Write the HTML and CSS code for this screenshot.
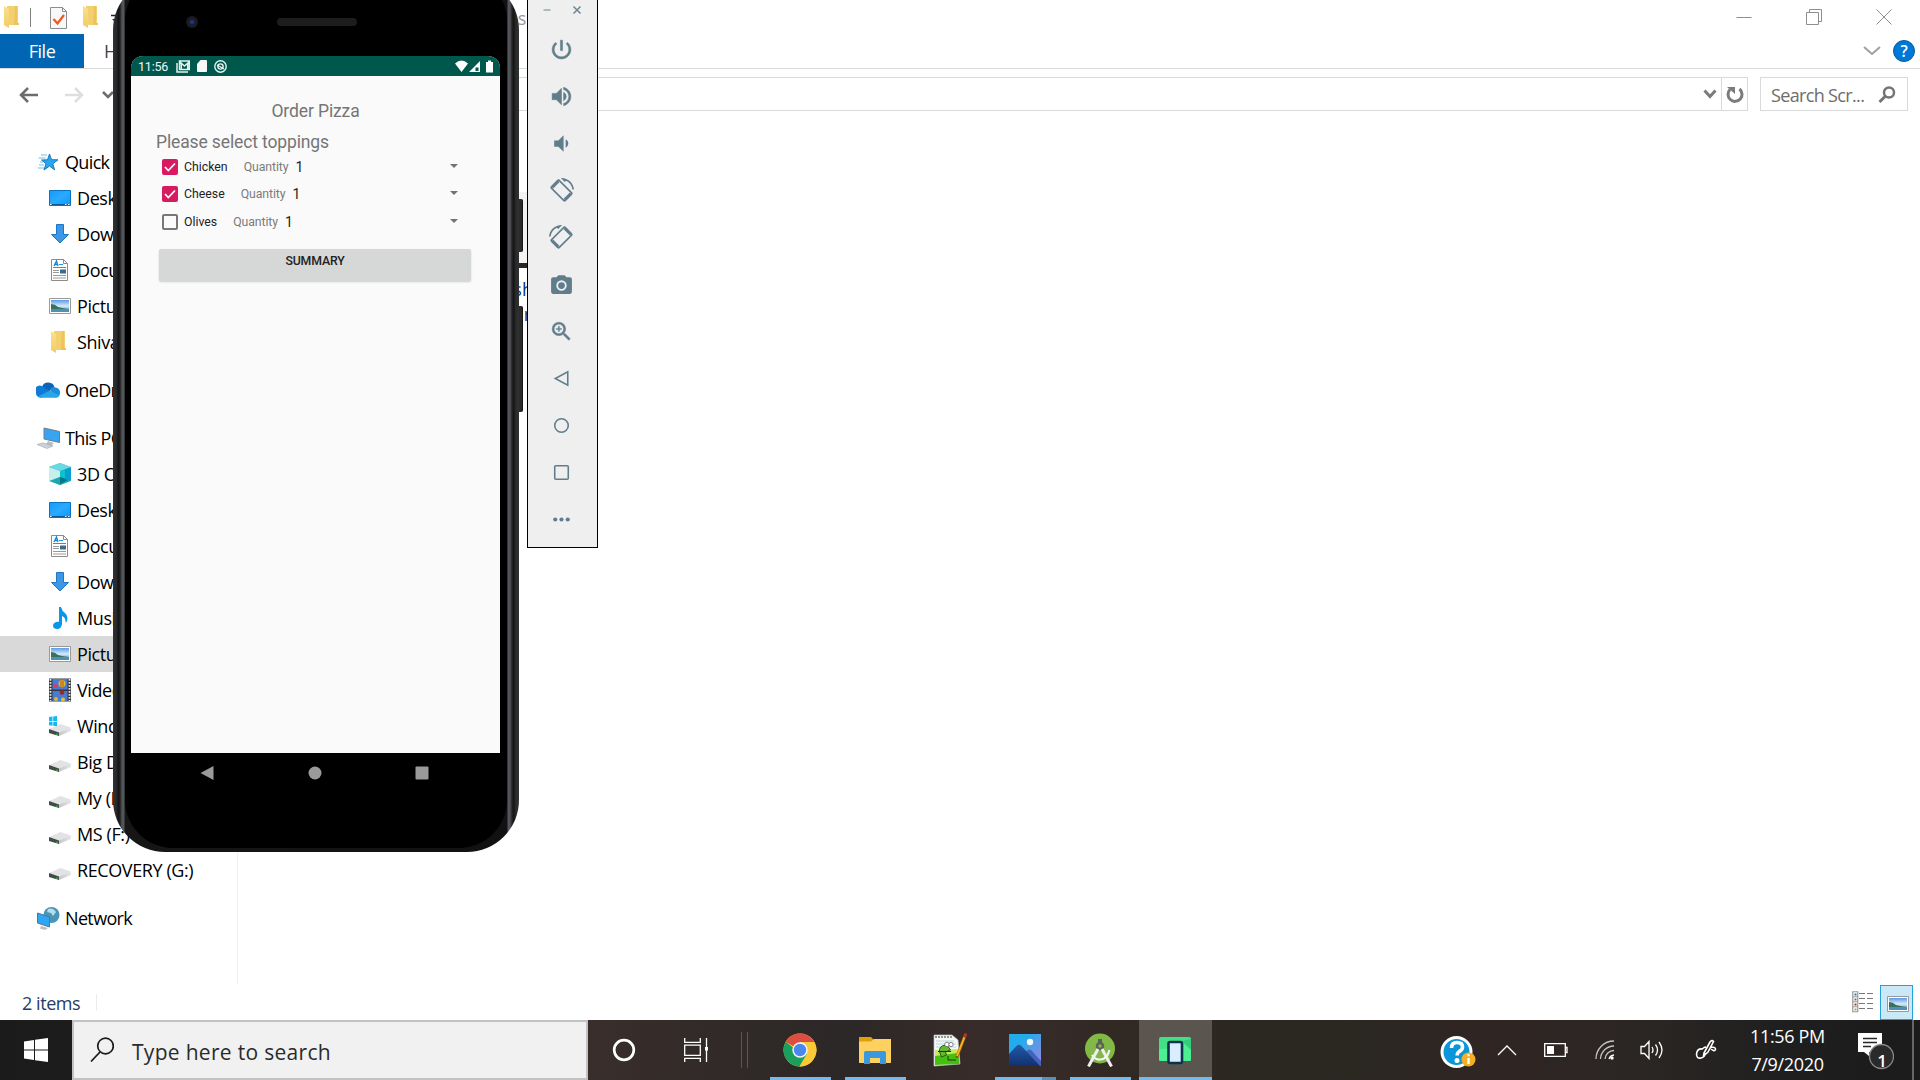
FILE: index.html
```html
<!DOCTYPE html>
<html lang="en">
<head>
<meta charset="utf-8">
<title>Desktop</title>
<link rel="stylesheet" href="styles.css">
</head>
<body>
<svg width="0" height="0" class="defs">
  <defs>
    <linearGradient id="sky" x1="0" y1="0" x2="0" y2="1"><stop offset="0" stop-color="#5b9be8"/><stop offset=".5" stop-color="#d8ecfa"/><stop offset="1" stop-color="#3f7fb0"/></linearGradient>
    <linearGradient id="blue" x1="0" y1="0" x2="1" y2="1"><stop offset="0" stop-color="#149bfa"/><stop offset=".5" stop-color="#2aaaff"/><stop offset="1" stop-color="#0d95fa"/></linearGradient>
    <linearGradient id="fold" x1="0" y1="0" x2="0" y2="1"><stop offset="0" stop-color="#fbe08c"/><stop offset="1" stop-color="#f3cb66"/></linearGradient>
    <linearGradient id="drive" x1="0" y1="0" x2="1" y2="0"><stop offset="0" stop-color="#c5c6c8"/><stop offset="1" stop-color="#e6e7e9"/></linearGradient>
    <symbol id="i-folder" viewBox="0 0 24 24"><path d="M6 1h11v19H6z" fill="#f3d06f"/><path d="M14 1h2v17h2v2h-5z" fill="#edc35a"/><path d="M3 1l5 3v19l-5-3z" fill="url(#fold)"/></symbol>
    <symbol id="i-star" viewBox="0 0 24 24"><path d="M13.500 4l2 5.700 6.500.1-5.200 4 1.800 6-5.100-3.700-5.500 3.900 2-6.300L5.500 10l6-.2z" fill="#2ba4ee" stroke="#167bc0"/><path d="M5 5h6M2.500 8h7M4 12h3M3 15h5M2 18h6" stroke="#6fc0ef" stroke-width="1.200"/></symbol>
    <symbol id="i-desktop" viewBox="0 0 24 24"><path d="M1.500 4.500h21v15h-21z" fill="url(#blue)" stroke="#0b72bf"/><path d="M2 18.500h20" stroke="#085a9e"/><path d="M2 18.500h1.500M17 18.500h1.500M20 18.500h1.500" stroke="#fff"/></symbol>
    <symbol id="i-down" viewBox="0 0 24 24"><path d="M8.500 2.500h7v10h5L12 21l-8.500-8.500h5z" fill="#3c98e6" stroke="#1f77c4"/></symbol>
    <symbol id="i-doc" viewBox="0 0 24 24"><path d="M3.500 1.500h12l4 4v17h-16z" fill="#fff" stroke="#8c8c8c"/><path d="M15.500 1.500v4h4" fill="none" stroke="#8c8c8c"/><path d="M6 8l2.500-5L10 8M7 6.500h3" fill="none" stroke="#1683d1" stroke-width="1.300"/><path d="M11 6.500h4M5 9.500h13" stroke="#2a94dc" stroke-width="1.200"/><path d="M5 12.500h6M5 14.500h6M5 17.500h13M5 20h13" stroke="#9a9a9a"/><path d="M12 11.500h6v4h-6z" fill="#386c8b"/></symbol>
    <symbol id="i-pic" viewBox="0 0 24 24"><path d="M1.500 4.500h21v15h-21z" fill="#fff" stroke="#999"/><path d="M3 6h18v12H3z" fill="url(#sky)"/><path d="M3 10q4 0 7 3 5 1.500 11 2H3z" fill="#397060"/><path d="M3 15h18v3H3z" fill="#4e90b6"/></symbol>
    <symbol id="i-cloud" viewBox="0 0 24 24"><path d="M6 9a6.500 6.500 0 0 1 12.500.5L12 14z" fill="#0b64b8"/><path d="M0 16A5 5 0 0 1 6.500 8.500l9.500 6-10 5A5 5 0 0 1 0 16z" fill="#0f7bd6"/><path d="M14 11.500q2-3.500 5.500-2A5 5 0 0 1 24 15q-.5 5-5 4.500z" fill="#168ddd"/><path d="M2 18.500L14 12.500l9.500 5q-1.500 2.500-5 2.300H6q-2.500 0-4-1.300z" fill="#28a4e8"/></symbol>
    <symbol id="i-pc" viewBox="0 0 24 24"><path d="M8 2l15.500 3.500v11L8 13z" fill="#38a5f3" stroke="#707d87"/><path d="M12 15l6 2-3 3h-6z" fill="#b9c0c5"/><path d="M1 18.500l6-1.500 10 3-6 2.500z" fill="#ccd3d8" stroke="#9ca5ab" stroke-width=".6"/></symbol>
    <symbol id="i-cube" viewBox="0 0 24 24"><path d="M12 1l11 4v14l-11 4-11-4V5z" fill="#31c1d4"/><path d="M1 5l11 4v6L1 19z" fill="#c5f0ee"/><path d="M12 9l11-4v14l-11-4z" fill="#069fd2"/><path d="M12 9l5-2v9l-5-1z" fill="#10c0cf"/><path d="M1 5l11-4 11 4-11 4z" fill="#6bd9df"/><path d="M12 15l10 4-10 4-10-4z" fill="#1fa5ae"/><path d="M12 15l8 3-8 4z" fill="#087783"/></symbol>
    <symbol id="i-music" viewBox="0 0 24 24"><path d="M11 1h2q1 4 4 6 4 4 1.500 9l-1 .5q.5-5-3.500-6.500V18q-.5 5-5 5-4-.2-4-3.500.5-4 6-3.800z" fill="#0697ef"/></symbol>
    <symbol id="i-video" viewBox="0 0 24 24"><path d="M1 .5h22v23H1z" fill="#35393d"/><path d="M2.500 1v22M21.500 1v22" stroke="#e5e5e5" stroke-width="1.800" stroke-dasharray="1.800 1.200"/><path d="M4.500 1h15v10.500h-15zM4.500 13h15v10h-15z" fill="#477bd5"/><circle cx="14" cy="5.500" r="3.500" fill="#e2b91e"/><path d="M13 2.500v6M15 2.500v6" stroke="#be2c22" stroke-width=".8"/><circle cx="7.500" cy="8" r="2" fill="#d83c65"/><circle cx="14" cy="14.500" r="2.300" fill="#a72420"/><circle cx="8" cy="21" r="2" fill="#e3b423"/><circle cx="15" cy="21.500" r="2" fill="#dbc43c"/></symbol>
    <symbol id="i-drive" viewBox="0 0 24 24"><path d="M1 13l11.500-5L23 11.500 11 17z" fill="#e2e3e5"/><path d="M1 13l10 3.500V20L1 17z" fill="#454947"/><path d="M11 16.500l12-5V15l-12 5z" fill="url(#drive)"/><path d="M8 17.500h2v1.500H8z" fill="#2aa337"/></symbol>
    <symbol id="i-win" viewBox="0 0 24 24"><use href="#i-drive"/><path d="M1 1l3.500-.5V5H1zM5.200.500L9 0v5H5.200zM1 5.700h3.500v4L1 9.200zM5.200 5.700H9v4.500l-3.800-.5z" fill="#13b9f2"/></symbol>
    <symbol id="i-net" viewBox="0 0 24 24"><circle cx="15.500" cy="9" r="8" fill="#4796b8"/><path d="M12 3q5-2 8 3l-3 4-2-3-4-1z" fill="#b9dcec"/><path d="M1.500 7l12 4v10L1.500 17z" fill="#31a5f5" stroke="#4c7790"/><path d="M5 20l7 2-3 2-5-1.500z" fill="#b7c1c6"/></symbol>
    <symbol id="i-rot" viewBox="0 0 24 24"><path d="M16.480 2.520c3.270 1.550 5.610 4.720 5.970 8.480h1.500C23.440 4.840 18.290 0 12 0l-.66.03 3.810 3.810 1.330-1.320zm-6.250-.770c-.59-.59-1.540-.59-2.120 0L1.750 8.110c-.59.59-.59 1.540 0 2.120l12.020 12.020c.59.59 1.540.59 2.120 0l6.360-6.360c.59-.59.59-1.540 0-2.120L10.230 1.750zm4.600 19.440L2.810 9.170l6.360-6.360 12.020 12.020-6.360 6.360z"/><path d="M2 8l2 2 6-6-2-2zM14 20l2 2 6-6-2-2z"/></symbol>
  </defs>
</svg>

<main class="explorer">
  <header class="titlebar">
    <div class="quickbar">
      <svg width="24" height="24"><use href="#i-folder"/></svg>
      <i class="vline"></i>
      <svg class="check-doc" width="20" height="24" viewBox="0 0 20 24"><path d="M1.500 1.500h12l4 4v17h-16z" fill="#f7f8fa" stroke="#8d8d8d"/><path d="M13.500 1.500v4h4" fill="none" stroke="#8d8d8d"/><path d="M4.500 13l4 4.500L15 9" fill="none" stroke="#f05a1a" stroke-width="2.300"/></svg>
      <svg class="new-folder" width="24" height="24"><use href="#i-folder"/></svg>
      <svg class="more" width="12" height="12" viewBox="0 0 12 12"><path d="M1 1.500h9" stroke="#222" stroke-width="1.500"/><path d="M2 5h8l-4 4z" fill="#222"/></svg>
    </div>
    <span class="caption">Screens</span>
    <div class="window-buttons">
      <svg width="16" height="16" viewBox="0 0 16 16"><path d="M.5 8.500h15"/></svg>
      <svg width="16" height="16" viewBox="0 0 16 16"><path d="M.5 3.500h12v12H.5zM3.500 3.500v-3h12v12h-3"/></svg>
      <svg width="16" height="16" viewBox="0 0 16 16"><path d="M.5.500l15 15M15.500.500l-15 15"/></svg>
    </div>
  </header>
  <nav class="tabs">
    <span class="file">File</span><span class="home">H</span>
    <div class="ribbon-end">
      <svg width="18" height="12" viewBox="0 0 18 12"><path d="M1 2l8 7 8-7" fill="none" stroke="#a0a0a0" stroke-width="2"/></svg>
      <span class="help">?</span>
    </div>
  </nav>
  <div class="address-row">
    <div class="arrows">
      <svg width="20" height="20" viewBox="0 0 20 20"><path d="M19 10H2M9 3l-7 7 7 7" fill="none" stroke="#6d6d6d" stroke-width="2.500"/></svg>
      <svg class="fwd" width="20" height="20" viewBox="0 0 20 20"><path d="M1 10h17M11 3l7 7-7 7" fill="none" stroke="#dedede" stroke-width="2.500"/></svg>
      <svg class="hist" width="12" height="8" viewBox="0 0 12 8"><path d="M1 1l5 5 5-5" fill="none" stroke="#6d6d6d" stroke-width="2.500"/></svg>
    </div>
    <div class="address">
      <svg class="drop" width="14" height="10" viewBox="0 0 14 10"><path d="M1.500 1.500L7 7.500l5.500-6" fill="none" stroke="#7b7b7b" stroke-width="3"/></svg>
      <div class="refresh"><svg width="18" height="18" viewBox="0 0 18 18"><path d="M4 3.500A7 7 0 1 0 13.500 3" fill="none" stroke="#7b7b7b" stroke-width="3"/><path d="M1 1h8v7z" fill="#7b7b7b"/></svg></div>
    </div>
    <div class="searchbox"><span>Search Scr...</span><svg width="18" height="18" viewBox="0 0 18 18"><circle cx="11" cy="6.500" r="5" fill="none" stroke="#747478" stroke-width="2.500"/><path d="M7.500 10L1.500 16" stroke="#747478" stroke-width="3"/></svg></div>
  </div>
  <div class="content">
    <aside class="sidebar">
      <div class="row top"><svg><use href="#i-star"/></svg><span>Quick</span></div>
      <div class="row"><svg><use href="#i-desktop"/></svg><span>Desktop</span></div>
      <div class="row"><svg><use href="#i-down"/></svg><span>Downloads</span></div>
      <div class="row"><svg><use href="#i-doc"/></svg><span>Documents</span></div>
      <div class="row"><svg><use href="#i-pic"/></svg><span>Pictures</span></div>
      <div class="row"><svg><use href="#i-folder"/></svg><span>Shiva</span></div>
      <div class="row top spaced"><svg><use href="#i-cloud"/></svg><span>OneDrive</span></div>
      <div class="row top spaced"><svg><use href="#i-pc"/></svg><span>This PC</span></div>
      <div class="row"><svg><use href="#i-cube"/></svg><span>3D Objects</span></div>
      <div class="row"><svg><use href="#i-desktop"/></svg><span>Desktop</span></div>
      <div class="row"><svg><use href="#i-doc"/></svg><span>Documents</span></div>
      <div class="row"><svg><use href="#i-down"/></svg><span>Downloads</span></div>
      <div class="row"><svg><use href="#i-music"/></svg><span>Music</span></div>
      <div class="row selected"><svg><use href="#i-pic"/></svg><span>Pictures</span></div>
      <div class="row"><svg><use href="#i-video"/></svg><span>Videos</span></div>
      <div class="row disk"><svg><use href="#i-win"/></svg><span>Windows</span></div>
      <div class="row disk"><svg><use href="#i-drive"/></svg><span>Big D</span></div>
      <div class="row disk"><svg><use href="#i-drive"/></svg><span>My (E:)</span></div>
      <div class="row disk"><svg><use href="#i-drive"/></svg><span>MS (F:)</span></div>
      <div class="row disk"><svg><use href="#i-drive"/></svg><span>RECOVERY (G:)</span></div>
      <div class="row top spaced"><svg><use href="#i-net"/></svg><span>Network</span></div>
    </aside>
    <section class="files">
      <div class="thumb"></div>
      <div class="name"><span>Screensh</span><span class="line2">or</span></div>
    </section>
  </div>
  <footer class="status">
    <span class="count">2 items</span>
    <div class="views">
      <svg class="list" width="22" height="22" viewBox="0 0 22 22"><path d="M.75.750h5v5h-5zM.75 5.750h5v5h-5zM.75 10.750h5v5h-5zM.75 15.750h5v5h-5z" fill="#fff" stroke="#999" stroke-width="1.200"/><path d="M7 2.500h6m2 0h6M7 7.500h6m2 0h6M7 12.500h6m2 0h6M7 17.500h6m2 0h6" stroke="#777"/><path d="M2.500 2.500h2v2h-2z" fill="#277a96"/><path d="M2.500 7.500h2v2h-2z" fill="#657957"/><path d="M2.500 12.500h2v2h-2z" fill="#c22c0e"/><path d="M2.500 17.500h2v2h-2z" fill="#b7a357"/></svg>
      <div class="large"><svg width="24" height="24"><use href="#i-pic"/></svg></div>
    </div>
  </footer>
</main>

<footer class="taskbar">
  <div class="start"><svg width="24" height="24" viewBox="0 0 24 24" fill="#fff"><path d="M0 3.500L10 2v9.500H0zM11 1.800L24 0v11.500H11zM0 12.500h10V22L0 20.500zM11 12.500h13V24l-13-1.800z"/></svg></div>
  <div class="search"><svg width="24" height="26" viewBox="0 0 24 26"><circle cx="15.500" cy="9" r="7.800" fill="none" stroke="#1b1b1b" stroke-width="1.700"/><path d="M10 15L1 24.500" stroke="#1b1b1b" stroke-width="1.800"/></svg><span>Type here to search</span></div>
  <div class="sys"><svg width="24" height="24" viewBox="0 0 24 24"><circle cx="12" cy="12" r="9.800" fill="none" stroke="#fff" stroke-width="2.700"/></svg></div>
  <div class="sys"><svg width="24" height="24" viewBox="0 0 24 24" fill="none" stroke="#fff" stroke-width="1.300"><path d="M.7 0v4.300h15.600V0M.7 7.200h15.600v10.200H.7zM.7 24v-3.700h15.600V24M22.500 0v24"/><path d="M21 9h3v3.500h-3z" fill="#fff" stroke="none"/></svg></div>
  <div class="grip"></div>
  <div class="app"><svg width="34" height="34" viewBox="0 0 34 34"><circle cx="17" cy="17" r="16.500" fill="#fbc937"/><path d="M17 17L2.700 8.700A16.500 16.500 0 0 1 31.300 9H17z" fill="#dc4e41"/><path d="M2.700 8.700A16.500 16.500 0 0 0 16.500 33.500L24 21l-7-1z" fill="#1a9f5c"/><path d="M31.300 9H17l7 12-7.500 12.500A16.500 16.500 0 0 0 31.300 9z" fill="#fbc937"/><circle cx="17" cy="17" r="7.700" fill="#f4f4f4"/><circle cx="17" cy="17" r="6.200" fill="#4a88ee"/></svg><i></i></div>
  <div class="app"><svg width="34" height="34" viewBox="0 0 34 34"><path d="M1 4h12l2.500 2.500H33V30H1z" fill="#e0a108"/><path d="M1 8.500h12l3-2.500h17v23q0 1-1 1H2q-1 0-1-1z" fill="#fdd060"/><path d="M6 31V20q0-2 2-2h18q2 0 2 2v11h-6v-6H12v6z" fill="#3a98de"/></svg><i></i></div>
  <div class="app"><svg width="34" height="34" viewBox="0 0 34 34"><path d="M1 2h18l6 5 2 24-26 2z" fill="#f5f8f6" stroke="#b9c0bc" stroke-width=".7"/><path d="M2 21l23-2 1.500 12L2 32z" fill="#45bf11"/><path d="M2 17l23-1v4L2 23z" fill="#c5e960"/><path d="M3 3v2m3-2v2m3-2v2m3-2v2m3-2v2m3-2v2" stroke="#333"/><path d="M3 8h18M3 11h20M3 14h20" stroke="#bcd5e3"/><path d="M6.500 19q-1-6 6-7l3 2 2 3-5 2 1 3-5 2z" fill="#64b92e" stroke="#174217" stroke-width=".8"/><circle cx="14" cy="11.500" r="2.300" fill="#fff" stroke="#555" stroke-width=".7"/><circle cx="18" cy="11.500" r="2.100" fill="#fff" stroke="#555" stroke-width=".7"/><path d="M5 18.500h13M15 23v4h8" stroke="#1d3a12" fill="none"/><path d="M32.500 1.500L23.500 25" stroke="#8e5c00" stroke-width="3"/><path d="M31.500 4L24 23" stroke="#fbb118" stroke-width="2"/><path d="M33 .500l-1.400 4" stroke="#b93129" stroke-width="2.500"/></svg></div>
  <div class="app"><svg width="34" height="34" viewBox="0 0 34 34"><defs><linearGradient id="ph" x1="0" x2="1" y1="0" y2="1"><stop offset=".3" stop-color="#22acec"/><stop offset="1" stop-color="#a480df"/></linearGradient><linearGradient id="mt" x1="0" x2="0" y1="0" y2="1"><stop offset="0" stop-color="#215ba8"/><stop offset="1" stop-color="#123070"/></linearGradient></defs><path d="M1 1h32v32H1z" fill="url(#ph)"/><path d="M17 20q4-6 7-2l9 10v5H17z" fill="#4263bd"/><path d="M1 21l8-8.500q2-1.500 4 0L32 33H1z" fill="url(#mt)"/><circle cx="22" cy="9" r="3.200" fill="#f4f8fa"/></svg><i class="stack"></i></div>
  <div class="app"><svg width="34" height="34" viewBox="0 0 34 34"><circle cx="17" cy="15.500" r="15" fill="#81b846"/><path d="M17 6v6" stroke="#5b615b" stroke-width="4"/><circle cx="17" cy="13" r="3" fill="#81b846" stroke="#5b615b" stroke-width="2.500"/><path d="M15 16L5.500 33.500M19 16l9.500 17.500" stroke="#eee" stroke-width="3"/><path d="M9 22q3 5 8 4.500 7 0 9.500-9.500" fill="none" stroke="#f5f5f5" stroke-width="2.200"/></svg><i></i></div>
  <div class="app active"><svg width="34" height="34" viewBox="0 0 34 34"><rect x="1" y="4" width="32" height="24" rx="2" fill="#42df87"/><path d="M24 8l9 8v11q0 1-2 1H3q-2 0-2-1V16h23z" fill="#4cef91"/><path d="M24 8l9 9V6z" fill="#36ca7c"/><rect x="10.500" y="9" width="13.500" height="21" rx="1.500" fill="#d9edff" stroke="#09344b" stroke-width="2.600"/></svg><i></i></div>
  <div class="tray">
    <div class="t-help"><svg width="36" height="34" viewBox="0 0 36 34"><circle cx="16.500" cy="17" r="16" fill="#fff"/><circle cx="16.500" cy="17" r="13" fill="#0b96da"/><path d="M11.500 13q0-5.500 5.500-5.500t5.500 4.500q0 3-3.300 4.500-2 1-2 4" fill="none" stroke="#fff" stroke-width="3.600"/><circle cx="17" cy="25.500" r="2.500" fill="#fff"/><circle cx="28.500" cy="24.500" r="7" fill="#f6ae23"/><path d="M28.500 23v6M28.500 19.300v2" stroke="#fff" stroke-width="2.400"/></svg></div>
    <div class="t-chev"><svg width="20" height="12" viewBox="0 0 20 12"><path d="M1 11l9-9 9 9"/></svg></div>
    <div class="t-bat"><svg width="24" height="14" viewBox="0 0 24 14"><path d="M.7.700h20.600v12.600H.7zM21.500 4.500h1.500v5h-1.500"/><path d="M3 3h7v8H3z" fill="#fff" stroke="none"/></svg></div>
    <div class="t-wifi"><svg width="20" height="20" viewBox="0 0 20 20"><path d="M1 19A18 18 0 0 1 19 1M5.500 19A13.500 13.500 0 0 1 19 6M10 19a9 9 0 0 1 9-8.500" stroke="#c5c4c3"/><path d="M14 19a6 6 0 0 1 5-4"/><circle cx="17" cy="18" r="1.700" fill="#fff" stroke="none"/></svg></div>
    <div class="t-vol"><svg width="24" height="20" viewBox="0 0 24 20"><path d="M1 6.500h3.500L9 1.500v17l-4.500-5H1zM12 7q2 3 0 6M15.500 4.500q4 5.500 0 11M19 2q6 8 0 16"/></svg></div>
    <div class="t-pen"><svg width="22" height="22" viewBox="0 0 22 22"><path d="M9 14l6-11q2-2.500 3.500-.5L13 13l-4.500 4zM11 8q-2 0-3 1.500M8 10q-6-1-6.500 5 0 5 4.500 4 4-1 4.500-5M16 8q5 0 4.500 2.500-1 2.500-4.500-.5" stroke-width="1.600"/></svg></div>
    <div class="clock"><span>11:56 PM</span><span>7/9/2020</span></div>
    <div class="action"><svg width="36" height="38" viewBox="0 0 36 38"><path d="M0 1h24v19H11v4l-5-4H0z" fill="#fff" stroke="none"/><path d="M5 6.500h14M5 10.500h14M5 14.500h8" stroke="#252525" stroke-width="1.300"/><circle cx="23.500" cy="24.500" r="12" fill="#2a2a2a" stroke="#8b8b8b"/></svg><b>1</b></div>
    <div class="peek"></div>
  </div>
</footer>

<div class="side-button power"></div>
<div class="side-button volume"></div>
<div class="phone">
  <div class="glass">
    <div class="bezel"><span class="camera"></span><span class="speaker"></span></div>
    <div class="screen">
      <div class="statusbar">
        <span>11:56</span>
        <svg class="n1" width="14" height="13" viewBox="0 0 14 13" fill="none" stroke="#e8f1ef" stroke-width="1.500"><path d="M3.500 1h9.800v8.500H3.500zM1 3v9h11M4 2l4.500 4L13 2M5.300 4v5M11.700 4v5"/></svg>
        <svg class="n2" width="10" height="12" viewBox="0 0 10 12" fill="#f4f8f7"><path d="M3.500 0H9q1 0 1 1v10q0 1-1 1H1q-1 0-1-1V4z"/></svg>
        <svg class="n3" width="13" height="13" viewBox="0 0 13 13" fill="none" stroke="#e8f1ef" stroke-width="1.400"><circle cx="6.500" cy="6.500" r="5.700"/><circle cx="6.500" cy="6.500" r="2.600"/><path d="M3 5l7 4"/></svg>
        <svg class="n4" width="40" height="13" viewBox="0 0 40 13" fill="#fff"><path d="M0 3.500Q6.500-2.500 13 3.500L6.500 12zM25 1v11H14zM31 2h2V.500h3V2h2v10.500h-7z"/><path d="M20.500 7.500h3V11h-3z" fill="#00574b"/></svg>
      </div>
      <div class="form">
        <h1>Order Pizza</h1>
        <h2>Please select toppings</h2>
        <div class="topping"><span class="box on"><svg width="16" height="16" viewBox="0 0 16 16"><path d="M3 8l3.300 3.500L13 4.500" fill="none" stroke="#fff" stroke-width="1.700"/></svg></span><span>Chicken</span><em>Quantity</em><b>1</b><i></i></div>
        <div class="topping"><span class="box on"><svg width="16" height="16" viewBox="0 0 16 16"><path d="M3 8l3.300 3.500L13 4.500" fill="none" stroke="#fff" stroke-width="1.700"/></svg></span><span>Cheese</span><em>Quantity</em><b>1</b><i></i></div>
        <div class="topping"><span class="box"></span><span>Olives</span><em>Quantity</em><b>1</b><i></i></div>
        <div class="summary">SUMMARY</div>
      </div>
    </div>
    <div class="softkeys">
      <svg width="14" height="14" viewBox="0 0 14 14"><path d="M13.500 0v14L.5 7z"/></svg>
      <svg width="14" height="14" viewBox="0 0 14 14"><circle cx="7" cy="7" r="6.500"/></svg>
      <svg width="14" height="14" viewBox="0 0 14 14"><rect x=".5" y=".5" width="13" height="13" rx="1"/></svg>
    </div>
  </div>
</div>

<div class="emu-tools">
  <div class="emu-top"><svg width="10" height="10" viewBox="0 0 10 10"><path d="M1.500 5h7" stroke="#9fb1ba" stroke-width="1.700"/></svg><svg width="10" height="10" viewBox="0 0 10 10"><path d="M1.500 1.500l7 7M8.500 1.500l-7 7" stroke="#6c8793" stroke-width="1.500"/></svg></div>
  <svg viewBox="0 0 24 24"><path d="M13 3h-2v10h2V3zm4.830 2.170l-1.420 1.420C17.990 7.860 19 9.810 19 12c0 3.870-3.130 7-7 7s-7-3.130-7-7c0-2.190 1.010-4.140 2.580-5.420L6.170 5.170C4.230 6.820 3 9.260 3 12c0 4.970 4.030 9 9 9s9-4.030 9-9c0-2.740-1.230-5.180-3.170-6.830z" stroke="#607d8b" stroke-width=".5"/></svg>
  <svg viewBox="0 0 24 24"><path d="M3 9v6h4l5 5V4L7 9H3zm13.500 3c0-1.770-1.020-3.290-2.500-4.030v8.050c1.480-.73 2.500-2.250 2.500-4.020zM14 3.230v2.060c2.890.86 5 3.540 5 6.710s-2.110 5.850-5 6.710v2.060c4.010-.91 7-4.490 7-8.770s-2.990-7.860-7-8.770z" stroke="#607d8b" stroke-width=".5"/></svg>
  <svg viewBox="0 0 24 24"><path d="M18.500 12c0-1.770-1.020-3.290-2.500-4.030v8.050c1.480-.73 2.500-2.250 2.500-4.020zM5 9v6h4l5 5V4L9 9H5z"/></svg>
  <svg viewBox="0 0 24 24"><use href="#i-rot"/></svg>
  <svg viewBox="0 0 24 24"><use href="#i-rot" transform="matrix(-1 0 0 1 24 0)"/></svg>
  <svg viewBox="0 0 24 24"><path d="M9 3L7.170 5H4c-1.100 0-2 .9-2 2v12c0 1.100.9 2 2 2h16c1.100 0 2-.9 2-2V7c0-1.100-.9-2-2-2h-3.170L15 3H9zm3 15a5 5 0 1 1 0-10 5 5 0 0 1 0 10z"/><circle cx="12" cy="13" r="3.200"/></svg>
  <svg viewBox="0 0 24 24"><path d="M15.500 14h-.79l-.28-.27A6.470 6.470 0 0 0 16 9.500 6.500 6.500 0 1 0 9.500 16c1.610 0 3.090-.59 4.230-1.570l.27.280v.79l5 4.990L20.490 19l-4.990-5zm-6 0C7.010 14 5 11.990 5 9.500S7.010 5 9.500 5 14 7.010 14 9.500 11.990 14 9.500 14zm2.500-4h-2v2H9v-2H7V9h2V7h1v2h2v1z" stroke="#607d8b" stroke-width=".4"/></svg>
  <svg viewBox="0 0 24 24" class="line"><path d="M18 5.500v13L6 12z"/></svg>
  <svg viewBox="0 0 24 24" class="line"><circle cx="12" cy="12" r="6.500"/></svg>
  <svg viewBox="0 0 24 24" class="line"><rect x="5.500" y="5.500" width="13" height="13" rx="1"/></svg>
  <svg viewBox="0 0 24 24"><circle cx="6" cy="12" r="2"/><circle cx="12" cy="12" r="2"/><circle cx="18" cy="12" r="2"/></svg>
</div>
</body>
</html>
```

FILE: styles.css
```css
* { box-sizing: border-box; }
body { margin: 0; width: 1920px; height: 1080px; overflow: hidden; position: relative; background: #fff; font-family: "Open Sans", "Noto Sans", sans-serif; font-size: 18px; color: #000; }
svg { display: block; flex: none; }
.defs { position: absolute; }

.explorer { height: 1020px; display: flex; flex-direction: column; }
.titlebar { height: 34px; display: flex; align-items: flex-start; }
.quickbar { display: flex; padding: 5px 0 0 1px; width: 424px; }
.vline { width: 1px; height: 19px; margin: 3px 0 0 5px; background: #7d7d7d; }
.check-doc { margin: 1px 0 0 18px; }
.new-folder { margin-left: 11px; }
.more { margin: 9px 0 0 6px; }
.caption { color: #999; line-height: 37px; letter-spacing: -.3px; width: 102px; text-align: right; }
.window-buttons { margin: 9px 28px 0 auto; display: flex; gap: 54px; fill: none; stroke: #8e8e8e; stroke-width: 1; }
.tabs { height: 35px; display: flex; border-bottom: 1px solid #dadbdc; line-height: 34px; letter-spacing: -.5px; }
.file { width: 84px; height: 34px; background: #0066b4; color: #fff; text-align: center; }
.home { padding-left: 20px; color: #444; }
.ribbon-end { margin-left: auto; display: flex; align-items: center; gap: 12px; padding-right: 5px; }
.help { width: 22px; height: 22px; border-radius: 50%; background: #0078d7; border: 1px solid #005a9e; color: #fff; font-size: 16px; font-weight: 600; line-height: 20px; text-align: center; }
.address-row { height: 50px; display: flex; padding: 8px 12px 8px 19px; }
.arrows { display: flex; align-items: center; width: 122px; padding-top: 1px; }
.fwd { margin-left: 25px; }
.hist { margin-left: 18px; }
.address { flex: 1; border: 1px solid #d9d9d9; display: flex; align-items: center; justify-content: flex-end; }
.drop { margin-right: 4px; }
.refresh { width: 26px; align-self: stretch; border-left: 1px solid #d9d9d9; display: flex; align-items: center; justify-content: center; padding: 2px 0 0 1px; }
.searchbox { width: 148px; margin-left: 12px; border: 1px solid #d9d9d9; display: flex; align-items: center; justify-content: space-between; padding: 1px 11px 0 10px; color: #6d6d6d; letter-spacing: -.65px; }

.content { flex: 1; display: flex; }
.sidebar { width: 238px; height: 865px; padding-top: 25px; border-right: 1px solid #f0f0f0; }
.row { height: 36px; display: flex; align-items: center; padding-left: 48px; gap: 5px; white-space: nowrap; letter-spacing: -.4px; }
.row svg { width: 24px; height: 24px; }
.row.top { padding-left: 36px; gap: 5px; letter-spacing: -.65px; }
.row.spaced { margin-top: 12px; }
.row.disk svg { margin-top: 4px; }
.row.selected { background: #d9d9d9; }
.files { padding: 73px 0 0 150px; }
.thumb { width: 150px; height: 76px; background: #f3f3f4; border-bottom: 5px solid #2b2522; }
.name { padding-top: 9px; line-height: 25px; width: 145px; text-align: right; color: #05388c; }
.name span { display: block; }
.name .line2 { color: #333; padding-right: 2px; }
.status { height: 36px; display: flex; align-items: center; color: #1f3d66; }
.count { padding: 0 16px 0 22px; height: 17px; line-height: 19px; border-right: 1px solid #ececec; letter-spacing: -.45px; }
.views { display: flex; align-items: center; margin-left: auto; padding-right: 7px; }
.list { margin-right: 6px; }
.large { width: 33px; height: 35px; border: 1px solid #26a0da; background: #cbe8f6; display: flex; padding: 6px 0 0 5px; }

.taskbar { height: 60px; display: flex; color: #fff; background: linear-gradient(90deg, #1b1b1b 0, #1d1c1c 72px, #392e2b 588px, #312a28 720px, #2c2827 850px, #382c2a 980px, #302823 1140px, #2b2821 1240px, #2c2722 1400px, #302523 1490px, #2a2624 1650px, #1e1e1e 1800px, #1b1b1b 1920px); }
.start { width: 72px; display: flex; align-items: center; justify-content: center; }
.search { width: 516px; border: 2px solid #c2c2c2; background: #f1f1f1; color: #2b2b2b; display: flex; align-items: center; gap: 18px; padding-left: 16px; font-size: 21px; letter-spacing: .3px; }
.search span { padding-top: 3px; }
.sys { width: 72px; display: flex; align-items: center; justify-content: center; }
.grip { width: 31px; display: flex; padding: 12px 0 12px 9px; }
.grip::before { content: ""; width: 5px; height: 36px; border: solid #5d5654; border-width: 0 1px; }
.app { width: 75px; display: flex; flex-direction: column; align-items: center; padding-top: 13px; }
.app svg { margin-right: 2px; }
.app i { width: 61px; height: 3px; margin-top: auto; background: #76b9ed; }
.app i.stack { border-right: 14px solid #5b8fb8; }
.active { background: #5a554f; width: 73px; margin-left: 1px; }
.active i { width: 73px; }
.tray { margin-left: auto; display: flex; fill: none; stroke: #fff; stroke-width: 1.300; }
.tray > div { display: flex; align-items: center; justify-content: center; }
.t-help { width: 50px; stroke: none; padding-top: 3px; }
.t-chev { width: 48px; } .t-bat { width: 50px; } .t-wifi { width: 47px; } .t-vol { width: 47px; } .t-pen { width: 62px; }
.tray .clock { width: 101px; flex-direction: column; gap: 3px; line-height: 25px; letter-spacing: -.35px; }
.action { width: 74px; position: relative; padding: 1px 0 0 1px; }
.action b { position: absolute; left: 38px; top: 30px; font-size: 17px; line-height: 22px; font-weight: 600; width: 12px; text-align: center; }
.tray .peek { width: 8px; border-left: 2px solid #666; }

.side-button { position: absolute; left: 515px; width: 8px; background: #2c2b2a; border-radius: 0 2px 2px 0; border-right: 1px solid #171717; }
.power { top: 199px; height: 53px; }
.volume { top: 306px; height: 106px; }
.phone { position: absolute; left: 113px; top: -22px; width: 406px; height: 874px; border-radius: 52px; padding: 0 12px 4px; background: linear-gradient(90deg, #303233 0, #252728 4px, #111 5px, #202122 7px, #505356 9px, #56585b 11px, #161616 12px, #111 394px, #56585b 395px, #505356 397px, #252626 399px, #111 401px, #252728 402px, #303233 406px); }
.glass { height: 870px; border-radius: 42px 42px 48px 48px; background: #000; padding: 0 7px 0 6px; }
.bezel { height: 78px; display: flex; align-items: flex-start; }
.camera { width: 12px; height: 12px; border-radius: 50%; margin: 38px 0 0 55px; background: radial-gradient(#263a78 0 10%, #151d35 35%, #1b1b1d 60%); }
.speaker { width: 80px; height: 8px; margin: 40px 0 0 79px; border-radius: 4px; background: #1d1d1d; }
.screen { width: 369px; height: 697px; background: #fafafa; border-radius: 12px 12px 0 0; overflow: hidden; font-family: Roboto, sans-serif; }
.statusbar { height: 20px; background: #00574b; display: flex; align-items: center; padding: 0 5px 0 7px; color: #f1f6f5; font-size: 12.500px; }
.statusbar span { width: 30px; letter-spacing: -.2px; }
.n1 { margin-left: 8px; } .n2 { margin-left: 7px; } .n3 { margin-left: 7px; } .n4 { margin-left: auto; }
.form { padding: 0 29px 0 25px; }
h1, h2 { margin: 0; font-weight: 400; font-size: 17.500px; line-height: 22px; color: #757575; }
h1 { text-align: center; margin-top: 24px; padding-left: 4px; letter-spacing: -.12px; }
h2 { margin-top: 9px; height: 22px; letter-spacing: -.13px; }
.topping { height: 27.500px; display: flex; align-items: center; padding-left: 6px; font-size: 12.300px; color: #222; }
.box { width: 16px; height: 16px; margin-right: 6px; border: 2px solid #777; border-radius: 2px; }
.box.on { background: #d81b60; border: 0; }
.topping em { font-style: normal; color: #7b7b7b; margin-left: 16px; letter-spacing: -.1px; }
.topping b { font-weight: 400; font-size: 14px; margin-left: 7px; }
.topping i { margin: 0 13px 2px auto; border: solid transparent; border-width: 4.500px 4.500px 0; border-top-color: #737373; }
.summary { height: 32px; margin: 13px 0 0 3px; border-radius: 2px; background: #d6d7d7; box-shadow: 0 1px 2px #ccc; font-size: 12.300px; font-weight: 500; text-align: center; line-height: 25px; letter-spacing: -.15px; color: #222; }
.softkeys { height: 41px; display: flex; justify-content: space-between; padding: 13px 71px 0 69px; fill: #9a9a9a; }

.emu-tools { position: absolute; left: 527px; top: -1px; width: 71px; height: 549px; border: 1px solid #000; background: #efefef; display: flex; flex-direction: column; align-items: center; gap: 22px; padding-right: 2px; fill: #607d8b; }
.emu-tools > svg { width: 25px; height: 25px; }
.emu-top { display: flex; gap: 20px; height: 15px; padding-top: 5px; }
.emu-tools .line { fill: none; stroke: #607d8b; stroke-width: 1.500; }
```
